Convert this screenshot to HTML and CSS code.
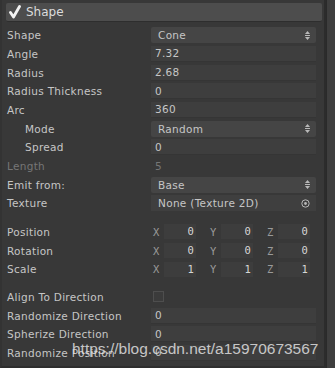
FILE: index.html
```html
<!DOCTYPE html>
<html lang="en">
<head>
    <meta charset="UTF-8">
    <title>Shape Module</title>
    <link rel="stylesheet" href="styles.css">
</head>
<body>
    <div class="inspector">
        <div class="panel">
            <div class="module-header">
                <svg class="check" width="12" height="14" viewBox="0 0 12 14">
                    <path d="M1.5 7.5 L4.5 12 L10.5 1.5" fill="none" stroke="#f2f2f2" stroke-width="2.8" stroke-linecap="round" stroke-linejoin="round"/>
                </svg>
                <span>Shape</span>
            </div>

            <div class="rows">
                <div class="row">
                    <div class="label">Shape</div>
                    <div class="value dropdown">Cone<svg class="arrows" width="5" height="9" viewBox="0 0 5 9"><path d="M2.5 0 L5 3 L0 3 Z M0 4 H5 V5 H0 Z M0 6 L5 6 L2.5 9 Z" fill="#b8b8b8"/></svg></div>
                </div>
                <div class="row">
                    <div class="label">Angle</div>
                    <div class="value field">7.32</div>
                </div>
                <div class="row">
                    <div class="label">Radius</div>
                    <div class="value field">2.68</div>
                </div>
                <div class="row">
                    <div class="label">Radius Thickness</div>
                    <div class="value field">0</div>
                </div>
                <div class="row">
                    <div class="label">Arc</div>
                    <div class="value field">360</div>
                </div>
                <div class="row">
                    <div class="label indent">Mode</div>
                    <div class="value dropdown">Random<svg class="arrows" width="5" height="9" viewBox="0 0 5 9"><path d="M2.5 0 L5 3 L0 3 Z M0 4 H5 V5 H0 Z M0 6 L5 6 L2.5 9 Z" fill="#b8b8b8"/></svg></div>
                </div>
                <div class="row">
                    <div class="label indent">Spread</div>
                    <div class="value field">0</div>
                </div>
                <div class="row disabled">
                    <div class="label">Length</div>
                    <div class="value field plain">5</div>
                </div>
                <div class="row">
                    <div class="label">Emit from:</div>
                    <div class="value dropdown">Base<svg class="arrows" width="5" height="9" viewBox="0 0 5 9"><path d="M2.5 0 L5 3 L0 3 Z M0 4 H5 V5 H0 Z M0 6 L5 6 L2.5 9 Z" fill="#b8b8b8"/></svg></div>
                </div>
                <div class="row">
                    <div class="label">Texture</div>
                    <div class="value object">None (Texture 2D)<svg class="target" width="9" height="9" viewBox="0 0 9 9"><circle cx="4.5" cy="4.5" r="3.7" fill="none" stroke="#b8b8b8" stroke-width="1"/><circle cx="4.5" cy="4.5" r="1.4" fill="#b8b8b8"/></svg></div>
                </div>

                <div class="gap"></div>

                <div class="row">
                    <div class="label">Position</div>
                    <div class="value vector">
                        <div class="comp"><span class="axis">X</span><span class="num">0</span></div>
                        <div class="comp"><span class="axis">Y</span><span class="num">0</span></div>
                        <div class="comp"><span class="axis">Z</span><span class="num">0</span></div>
                    </div>
                </div>
                <div class="row">
                    <div class="label">Rotation</div>
                    <div class="value vector">
                        <div class="comp"><span class="axis">X</span><span class="num">0</span></div>
                        <div class="comp"><span class="axis">Y</span><span class="num">0</span></div>
                        <div class="comp"><span class="axis">Z</span><span class="num">0</span></div>
                    </div>
                </div>
                <div class="row">
                    <div class="label">Scale</div>
                    <div class="value vector">
                        <div class="comp"><span class="axis">X</span><span class="num">1</span></div>
                        <div class="comp"><span class="axis">Y</span><span class="num">1</span></div>
                        <div class="comp"><span class="axis">Z</span><span class="num">1</span></div>
                    </div>
                </div>

                <div class="gap small"></div>

                <div class="row">
                    <div class="label">Align To Direction</div>
                    <div class="value"><span class="checkbox"></span></div>
                </div>
                <div class="row">
                    <div class="label">Randomize Direction</div>
                    <div class="value field">0</div>
                </div>
                <div class="row">
                    <div class="label">Spherize Direction</div>
                    <div class="value field">0</div>
                </div>
                <div class="row">
                    <div class="label">Randomize Position</div>
                    <div class="value field">0</div>
                </div>
            </div>
        </div>
        <div class="scrollbar"></div>
    </div>
    <div class="watermark">https://blog.csdn.net/a15970673567</div>
</body>
</html>
```

FILE: styles.css
```css
html, body {
    margin: 0;
    padding: 0;
}

body {
    width: 335px;
    height: 368px;
    overflow: hidden;
    background-color: #383838;
    color: #c6c6c6;
    font-family: "DejaVu Sans", sans-serif;
    font-size: 10.5px;
    position: relative;
}

.inspector {
    display: flex;
    height: 368px;
}

.panel {
    flex: 1;
    padding: 3px 2px 0 4px;
    border-left: 2px solid #333;
    border-right: 2px solid #2c2c2c;
    border-bottom: 2px solid #2e2e2e;
    box-sizing: border-box;
}

.module-header {
    height: 18px;
    display: flex;
    align-items: center;
    gap: 5px;
    padding-left: 3px;
    background-color: #4d4d4d;
    border-radius: 2px;
    border-bottom: 1px solid #2e2e2e;
    font-size: 12px;
    color: #dcdcdc;
}

.rows {
    padding-top: 4px;
}

.row {
    height: 18.67px;
    display: flex;
    align-items: center;
}

.label {
    width: 144px;
    padding-left: 1px;
    white-space: nowrap;
    letter-spacing: 0.3px;
}

.label.indent {
    padding-left: 19px;
    width: 126px;
}

.disabled {
    color: #767676;
}

.value {
    flex: 1;
    height: 16px;
    margin-right: 6px;
    display: flex;
    align-items: center;
    box-sizing: border-box;
    letter-spacing: 0.3px;
}

.field {
    padding-left: 4px;
    background-color: #3e3e3e;
    border-bottom: 1px solid #353535;
}

.field.plain {
    background-color: transparent;
    border-bottom: none;
}

.dropdown {
    padding: 0 6px 0 7px;
    background-color: #454545;
    border-radius: 2px;
    justify-content: space-between;
}

.object {
    padding: 0 6px 0 7px;
    background-color: #3f3f3f;
    justify-content: space-between;
}

.vector {
    display: flex;
    margin-right: 0;
}

.comp {
    width: 57px;
    flex: none;
    display: flex;
    align-items: center;
    height: 16px;
}

.axis {
    width: 12px;
    padding-left: 2px;
    color: #9a9a9a;
    font-family: "DejaVu Sans Mono", monospace;
}

.num {
    width: 31px;
    height: 15px;
    margin-right: 12px;
    padding-right: 2px;
    text-align: right;
    line-height: 15px;
    background-color: #3d3d3d;
    font-family: "DejaVu Sans Mono", monospace;
    color: #d6d6d6;
}

.checkbox {
    width: 9px;
    height: 9px;
    margin-left: 2px;
    border: 1px solid #4e4e4e;
    background-color: #3b3b3b;
}

.gap {
    height: 10px;
}

.gap.small {
    height: 9px;
}

.scrollbar {
    width: 13px;
    background-color: #3e3e3e;
    border-left: 1px solid #2a2a2a;
}

.watermark {
    position: absolute;
    left: 72px;
    top: 340px;
    font-family: "Liberation Sans", sans-serif;
    font-size: 15.5px;
    color: rgba(225, 225, 225, 0.85);
    white-space: nowrap;
}
```
